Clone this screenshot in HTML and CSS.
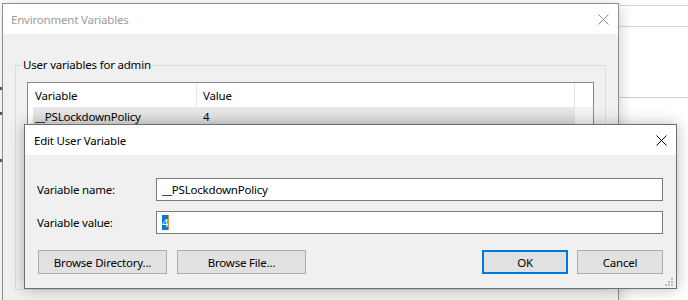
FILE: index.html
```html
<!DOCTYPE html>
<html>
<head>
<meta charset="utf-8">
<link rel="stylesheet" href="styles.css">
</head>
<body>
<div class="desk">
  <div class="bgwin">
    <div class="bgwin-bar"></div>
    <div class="bgwin-sep"></div>
  </div>
  <div class="mark m1"></div>
  <div class="mark m2"></div>
  <div class="mark m3"></div>

  <section class="win env">
    <header class="titlebar">
      <span class="title">Environment Variables</span>
      <svg class="close" width="11" height="11" viewBox="0 0 11 11"><path d="M0.5 0.5 L10.5 10.5 M10.5 0.5 L0.5 10.5" stroke="#8a8a8a" stroke-width="1" fill="none"/></svg>
    </header>
    <div class="env-body">
      <fieldset class="group">
        <legend>User variables for admin</legend>
        <div class="list">
          <div class="list-main">
            <div class="list-head">
              <span class="hc1">Variable</span>
              <span class="hc2">Value</span>
            </div>
            <div class="list-row sel">
              <span class="rc1">__PSLockdownPolicy</span>
              <span class="rc2">4</span>
            </div>
          </div>
          <div class="vscroll"></div>
        </div>
      </fieldset>
    </div>
  </section>

  <section class="win edit">
    <header class="titlebar">
      <span class="title">Edit User Variable</span>
      <svg class="close" width="11" height="11" viewBox="0 0 11 11"><path d="M0.5 0.5 L10.5 10.5 M10.5 0.5 L0.5 10.5" stroke="#000" stroke-width="1" fill="none"/></svg>
    </header>
    <div class="edit-body">
      <div class="form">
        <label class="lbl">Variable name:</label>
        <div class="field">__PSLockdownPolicy</div>
        <label class="lbl">Variable value:</label>
        <div class="field"><span class="selection">4</span><span class="caret"></span></div>
      </div>
      <div class="buttons">
        <button class="btn wide">Browse Directory...</button>
        <button class="btn wide">Browse File...</button>
        <span class="spacer"></span>
        <button class="btn std default">OK</button>
        <button class="btn std">Cancel</button>
      </div>
    </div>
    <svg class="grip" width="10" height="10" viewBox="0 0 10 10">
      <rect x="7" y="1" width="2" height="2" fill="#bcbcbc"/>
      <rect x="4" y="4" width="2" height="2" fill="#bcbcbc"/>
      <rect x="7" y="4" width="2" height="2" fill="#bcbcbc"/>
      <rect x="1" y="7" width="2" height="2" fill="#bcbcbc"/>
      <rect x="4" y="7" width="2" height="2" fill="#bcbcbc"/>
      <rect x="7" y="7" width="2" height="2" fill="#bcbcbc"/>
    </svg>
  </section>
</div>
</body>
</html>
```

FILE: styles.css
```css
* { box-sizing: border-box; }
html, body {
  margin: 0;
  padding: 0;
  background: #fff;
  width: 688px;
  height: 300px;
  overflow: hidden;
}
body {
  font-family: "Noto Sans", "Open Sans", sans-serif;
  font-size: 11.5px;
  letter-spacing: -0.2px;
  color: #000;
}
.desk {
  position: relative;
  width: 688px;
  height: 300px;
  overflow: hidden;
}

/* window behind on the right */
.bgwin {
  position: absolute;
  left: 600px;
  top: 5px;
  width: 120px;
  height: 320px;
  border-top: 1px solid #d6d6d6;
}
.bgwin-bar {
  height: 21px;
  border-bottom: 1px solid #d6d6d6;
}
.bgwin-sep {
  margin-top: 70px;
  border-top: 1px solid #cfcfcf;
}

.mark {
  position: absolute;
  left: 0;
  width: 2px;
  height: 3px;
  background: #5a5a5a;
}
.m1 { top: 87px; }
.m2 { top: 112px; }
.m3 { top: 159px; }

/* generic window */
.win {
  position: absolute;
  background: #f0f0f0;
  display: flex;
  flex-direction: column;
}
.titlebar {
  height: 30px;
  background: #fff;
  display: flex;
  align-items: center;
  flex: none;
}
.close { flex: none; margin-left: auto; }

/* Environment Variables dialog */
.env {
  left: 2px;
  top: 3px;
  width: 617px;
  height: 330px;
  border: 1px solid #8e8e8e;
  box-shadow: 2px 2px 12px rgba(0,0,0,0.18);
}
.env .titlebar { padding: 0 9px 0 8px; }
.env .title { color: #9b9b9b; }
.env-body {
  flex: 1;
  padding: 0 12px;
}
.group {
  margin: 23px 0 0;
  padding: 0 11px 0 5px;
  border: 1px solid #dcdcdc;
  height: 233px;
}
.group legend {
  padding: 0 2px;
  line-height: 16px;
}
.list {
  margin: 9px 0 0 6px;
  border: 1px solid #828790;
  background: #fff;
  height: 200px;
  display: flex;
}
.list-main { flex: 1; }
.list-head {
  height: 24px;
  display: flex;
  align-items: center;
}
.hc1 {
  width: 169px;
  height: 100%;
  display: flex;
  align-items: center;
  padding-left: 7px;
  border-right: 1px solid #e5e5e5;
}
.hc2 { padding-left: 6px; }
.list-row {
  margin-left: 5px;
  height: 18px;
  display: flex;
  align-items: center;
}
.sel { background: linear-gradient(#e9e9e9, #dedede); }
.rc1 { width: 164px; padding-left: 2px; }
.rc2 { padding-left: 6px; }
.vscroll {
  width: 19px;
  border-left: 1px solid #e2e2e2;
  background: linear-gradient(to bottom, #fff 24px, #f3f3f3 24px, #fbfbfb 60px);
}

/* Edit User Variable dialog */
.edit {
  left: 24px;
  top: 124px;
  width: 653px;
  height: 165px;
  border: 1px solid #6f6f6f;
  box-shadow: 0 0 14px rgba(0,0,0,0.28);
}
.edit .titlebar { padding: 0 9px 0 9px; }
.edit-body {
  flex: 1;
  padding: 23px 13px 0 12px;
  display: flex;
  flex-direction: column;
}
.form {
  display: grid;
  grid-template-columns: 119px 1fr;
  row-gap: 10px;
  align-items: center;
}
.field {
  height: 23px;
  border: 1px solid #7a7a7a;
  background: #fff;
  padding-left: 5px;
  display: flex;
  align-items: center;
}
.selection {
  background: #0078d7;
  color: #fff;
  line-height: 15px;
  padding-right: 0;
}
.caret {
  width: 1px;
  height: 15px;
  background: #e08a2a;
}
.buttons {
  margin-top: 16px;
  display: flex;
  gap: 10px;
  padding-left: 1px;
}
.spacer { flex: 1; }
.btn {
  height: 24px;
  font: inherit;
  letter-spacing: inherit;
  color: #000;
  background: #e1e1e1;
  border: 1px solid #adadad;
  padding: 0;
  margin: 0;
}
.wide { width: 129px; }
.std { width: 86px; }
.default { border: 2px solid #0078d7; margin-right: -1px; }
.grip {
  position: absolute;
  right: 2px;
  bottom: 1px;
}
```
